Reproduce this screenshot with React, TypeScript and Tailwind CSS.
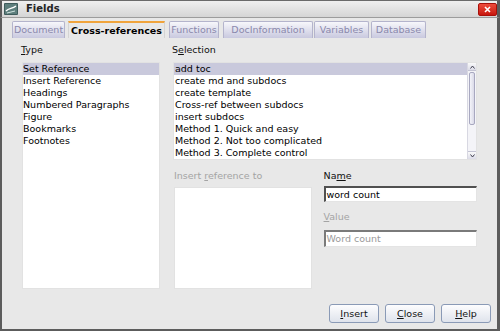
import React from "react";

function U({ c }: { c: string }) {
  return <span className="underline underline-offset-[1px]">{c}</span>;
}

const tabBase =
  "h-[17px] flex items-center justify-center text-[#8a88ac] border border-b-0 border-[#b4b4cc] rounded-t-[2px] bg-linear-to-b from-[#f7f7fb] to-[#c9c9df]";

export default function App() {
  const typeItems = [
    "Set Reference",
    "Insert Reference",
    "Headings",
    "Numbered Paragraphs",
    "Figure",
    "Bookmarks",
    "Footnotes",
  ];
  const selItems = [
    "add toc",
    "create md and subdocs",
    "create template",
    "Cross-ref between subdocs",
    "insert subdocs",
    "Method 1. Quick and easy",
    "Method 2. Not too complicated",
    "Method 3. Complete control",
    "documentation",
  ];
  return (
    <div className="w-[500px] h-[331px] flex flex-col bg-[#e8e8e8] font-['DejaVu_Sans',sans-serif] text-[9.5px] leading-[12px] text-black overflow-hidden">
      {/* Title bar */}
      <div className="h-[18px] shrink-0 flex items-center border-t border-l-2 border-r-[3px] border-b border-t-[#6a6a6a] border-l-[#5c5c5c] border-r-[#5c5c5c] border-b-[#9c9c9c] bg-linear-to-b from-[#efefef] to-[#d5d5d5]">
        <svg width="14" height="12" viewBox="0 0 14 12" className="ml-[2px]">
          <rect x="0" y="0" width="14" height="12" rx="1" fill="#3f5c5c" />
          <rect x="1" y="1" width="12" height="10" fill="#5e7f7d" />
          <path d="M2 8 C5 5, 8 6, 12 3" stroke="#ffffff" strokeWidth="1.4" fill="none" />
          <path d="M3 10 L11 8" stroke="#cfe3df" strokeWidth="1" fill="none" />
        </svg>
        <span className="ml-[8px] font-bold text-[10px] text-[#222]">Fields</span>
        <div className="ml-auto mr-[0px] w-[19px] h-[13px] rounded-[2px] bg-linear-to-b from-[#ee4a3a] to-[#c8140c] border border-[#a8100a] flex items-center justify-center">
          <svg width="7" height="7" viewBox="0 0 7 7">
            <path d="M1 1 L6 6 M6 1 L1 6" stroke="#fff" strokeWidth="1.6" />
          </svg>
        </div>
      </div>

      {/* Body */}
      <div className="flex-1 flex flex-col border-l-2 border-r-[3px] border-b-2 border-[#5c5c5c]">
        {/* Tabs */}
        <div className="flex items-end pt-[3px] pl-[10px] h-[20px] shrink-0">
          <div className={tabBase + " w-[53px]"}>Document</div>
          <div className="ml-[3px] w-[97px] h-[17px] flex items-center justify-center font-bold text-black border-t-2 border-t-[#f0a43c] border-x border-x-[#d4d4d4]">
            Cross-references
          </div>
          <div className={tabBase + " ml-[4px] w-[50px]"}>Functions</div>
          <div className={tabBase + " ml-[4px] w-[90px]"}>DocInformation</div>
          <div className={tabBase + " ml-[1px] w-[55px]"}>Variables</div>
          <div className={tabBase + " ml-[2px] w-[55px]"}>Database</div>
        </div>

        {/* Content */}
        <div className="flex pl-[20px] pt-[6px] gap-[13px]">
          {/* Type column */}
          <div className="w-[138px] flex flex-col">
            <div className="h-[12px] -ml-[1px] text-[#111]">
              <U c="T" />ype
            </div>
            <div className="mt-[6px] h-[227px] bg-white border border-[#e2e2e2] overflow-hidden">
              {typeItems.map((t, i) => (
                <div
                  key={t}
                  className={
                    "h-[12px] whitespace-nowrap " +
                    (i === 0 ? "bg-[#c9c9dc]" : "")
                  }
                >
                  {t}
                </div>
              ))}
            </div>
          </div>

          {/* Selection column */}
          <div className="w-[304px] flex flex-col">
            <div className="h-[12px] -ml-[1px] text-[#111]">
              S<U c="e" />lection
            </div>
            <div className="mt-[6px] h-[98px] bg-white border border-[#e2e2e2] flex overflow-hidden">
              <div className="flex-1 overflow-hidden">
                {selItems.map((t, i) => (
                  <div
                    key={t}
                    className={
                      "h-[12px] pl-[1px] whitespace-nowrap " +
                      (i === 0 ? "bg-[#c9c9dc]" : "")
                    }
                  >
                    {t}
                  </div>
                ))}
              </div>
              <div className="w-[9px] flex flex-col bg-[#f4f4f8] border-l border-[#d8d8e2]">
                <div className="h-[8px] flex items-center justify-center border-b border-[#c4c4d4] bg-linear-to-b from-[#fafafa] to-[#dcdce8]">
                  <svg width="5" height="4" viewBox="0 0 5 4">
                    <path d="M0.5 3.5 L2.5 1 L4.5 3.5" stroke="#404050" strokeWidth="1" fill="none" />
                  </svg>
                </div>
                <div className="flex-1 px-[1px] pt-[1px]">
                  <div className="h-[53px] rounded-[2px] border border-[#a8a8c0] bg-linear-to-r from-[#f4f4fa] to-[#dadae8]" />
                </div>
                <div className="h-[8px] flex items-center justify-center border-t border-[#c4c4d4] bg-linear-to-b from-[#fafafa] to-[#dcdce8]">
                  <svg width="5" height="4" viewBox="0 0 5 4">
                    <path d="M0.5 0.5 L2.5 3 L4.5 0.5" stroke="#404050" strokeWidth="1" fill="none" />
                  </svg>
                </div>
              </div>
            </div>

            <div className="mt-[10px] flex gap-[12px] pl-[1px]">
              <div className="w-[138px] flex flex-col">
                <div className="h-[12px] text-[#a4a4a4]">
                  Insert <U c="r" />eference to
                </div>
                <div className="mt-[5px] h-[102px] bg-white border border-[#e2e2e2]" />
              </div>
              <div className="w-[154px] flex flex-col">
                <div className="h-[12px] text-[#111]">
                  Na<U c="m" />e
                </div>
                <div className="mt-[4px] h-[16px] bg-white border-t-2 border-l-2 border-r border-b border-t-[#505050] border-l-[#505050] border-r-[#e4e4e4] border-b-[#e4e4e4] flex items-center pl-[1px]">
                  word count
                </div>
                <div className="mt-[9px] h-[12px] text-[#a4a4a4]">
                  <U c="V" />alue
                </div>
                <div className="mt-[7px] h-[17px] bg-white border-t-2 border-l-2 border-r border-b border-t-[#7a7a7a] border-l-[#7a7a7a] border-r-[#e4e4e4] border-b-[#e4e4e4] flex items-center pl-[1px] text-[#9a9a9a]">
                  Word count
                </div>
              </div>
            </div>
          </div>
        </div>

        {/* Buttons */}
        <div className="mt-auto flex justify-end gap-[6px] pr-[6px] pb-[6px]">
          {[
            ["I", "nsert"],
            ["C", "lose"],
            ["H", "elp"],
          ].map(([a, b]) => (
            <div
              key={a}
              className="w-[50px] h-[19px] flex items-center justify-center rounded-[3px] border border-[#8a9ab6] bg-linear-to-b from-[#fdfdfe] to-[#dfe3ec] text-[#111]"
            >
              <U c={a} />
              {b}
            </div>
          ))}
        </div>
      </div>
    </div>
  );
}
